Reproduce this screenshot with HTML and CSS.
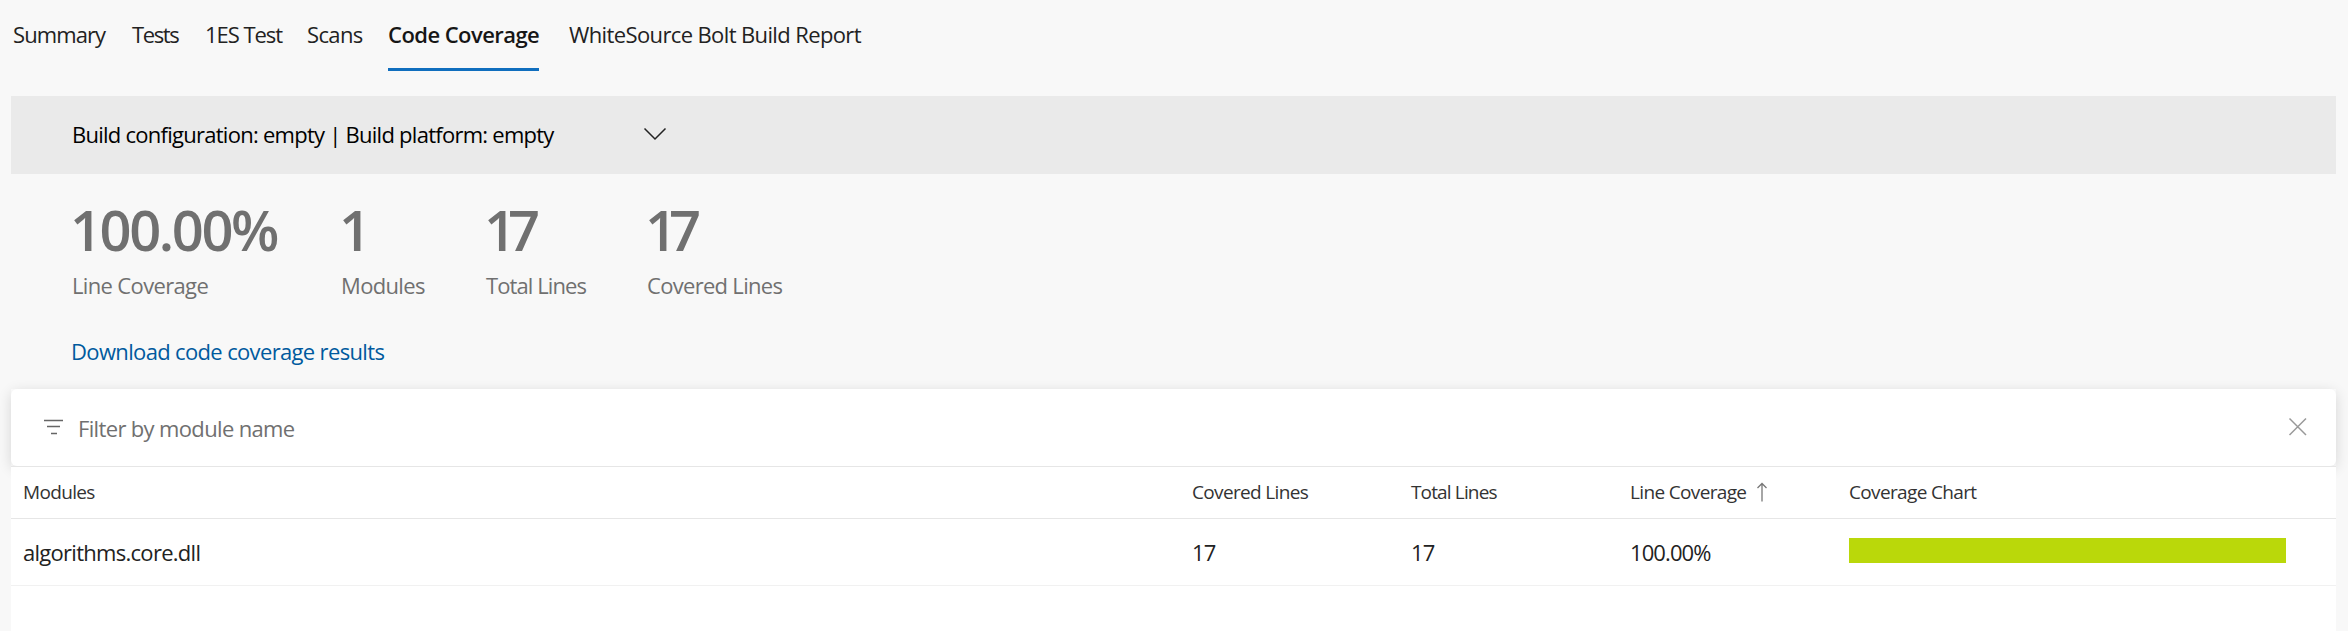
FILE: index.html
```html
<!DOCTYPE html>
<html lang="en">
<head>
<meta charset="utf-8">
<title>Code Coverage</title>
<link rel="stylesheet" href="styles.css">
</head>
<body>
<nav class="tabs">
  <a class="tab summary"><span>Summary</span></a>
  <a class="tab tests"><span>Tests</span></a>
  <a class="tab es-test"><span>1ES Test</span></a>
  <a class="tab scans"><span>Scans</span></a>
  <a class="tab active"><span>Code Coverage</span></a>
  <a class="tab report"><span>WhiteSource Bolt Build Report</span></a>
</nav>
<main class="content">
  <div class="config">
    <span class="config-text">Build configuration: empty | Build platform: empty</span>
    <svg class="chevron" width="24" height="14" viewBox="0 0 24 14"><path d="M1.500 1.500 12 12 22.500 1.500"/></svg>
  </div>
  <section class="stats">
    <div class="stat coverage"><strong>100.00%</strong><span>Line Coverage</span></div>
    <div class="stat modules"><strong>1</strong><span>Modules</span></div>
    <div class="stat total"><strong>17</strong><span>Total Lines</span></div>
    <div class="stat covered"><strong>17</strong><span>Covered Lines</span></div>
  </section>
  <a class="download"><span>Download code coverage results</span></a>
  <section class="table">
    <div class="filter">
      <svg class="funnel" width="20" height="16" viewBox="0 0 20 16"><path d="M1 1.500h19M4 7.500h13M8 14.500h6"/></svg>
      <span class="placeholder">Filter by module name</span>
      <svg class="close" width="20" height="20" viewBox="0 0 20 20"><path d="M1.500 1.500 18 18M18 1.500 1.500 18"/></svg>
    </div>
    <div class="row head">
      <span>Modules</span><span>Covered Lines</span><span class="total-lines">Total Lines</span>
      <span class="sorted"><span>Line Coverage</span><svg width="12" height="20" viewBox="0 0 12 20"><path d="M6 19.500V1.500M1.500 6 6 1.500 10.500 6"/></svg></span>
      <span>Coverage Chart</span>
    </div>
    <div class="row data">
      <span>algorithms.core.dll</span><span>17</span><span>17</span><span class="percent">100.00%</span><div class="bar"></div>
    </div>
  </section>
</main>
</body>
</html>
```
FILE: styles.css
```css
* { box-sizing: border-box; }
body {
  margin: 0;
  height: 631px;
  overflow: hidden;
  background: #f8f8f8;
  color: #222;
  font: 22px/30px "Open Sans", "Noto Sans", sans-serif;
  letter-spacing: -0.65px;
  white-space: nowrap;
}
svg { display: block; fill: none; flex: none; }
.tabs { display: flex; height: 71px; padding-left: 13px; line-height: 69px; }
.tab { flex: none; }
.summary { width: 119px; letter-spacing: -0.9px; }
.tests { width: 73px; letter-spacing: -1.4px; }
.es-test { width: 102px; letter-spacing: -1.05px; }
.scans { width: 81px; }
.active { width: 151px; margin-right: 30px; border-bottom: 3px solid #106ebe; font-weight: 600; letter-spacing: -0.55px; color: #161616; }
.report { letter-spacing: -0.62px; }
.content { margin: 25px 12px 0 11px; }
.config { display: flex; align-items: center; height: 78px; padding-left: 61px; background: #eaeaea; color: #000; letter-spacing: -0.74px; }
.config-text { width: 571px; padding-bottom: 3px; }
.chevron { margin-bottom: 3px; stroke: #222; stroke-width: 1.5; }
.stats { display: flex; height: 154px; padding: 20px 0 0 61px; color: #707070; }
.stat strong { display: block; height: 71px; font-size: 56px; line-height: 71px; font-weight: 600; letter-spacing: -8px; text-indent: -2px; }
.stat.coverage strong { letter-spacing: -2.4px; }
.stat span { line-height: 41px; }
.coverage { width: 269px; }
.modules { width: 145px; }
.total { width: 161px; letter-spacing: -0.9px; }
.covered { letter-spacing: -0.7px; }
.download { display: block; height: 61px; padding: 8px 0 0 60px; color: #005a9e; }
.table { height: 242px; background: #fff; }
.filter { display: flex; align-items: center; height: 77px; padding: 0 28px 0 32px; border-radius: 6px; background: #fff; box-shadow: 0 3px 14px rgba(0,0,0,.14); color: #707070; }
.funnel { margin-bottom: 1px; stroke: #666; stroke-width: 1.5; }
.placeholder { margin-left: 15px; letter-spacing: -0.65px; }
.close { margin: 0 0 1px auto; stroke: #999; stroke-width: 1.5; }
.row { position: relative; display: grid; grid-template-columns: 1169px 219px 219px 219px 437px; align-items: center; padding-left: 12px; background: #fff; }
.head { height: 53px; padding-bottom: 1px; border-top: 1px solid #e6e6e6; border-bottom: 1px solid #e6e6e6; font-size: 19px; color: #333; }
.total-lines { letter-spacing: -0.85px; }
.sorted { display: flex; align-items: center; gap: 10px; }
.sorted svg { stroke: #777; stroke-width: 1.3; }
.data { height: 67px; border-bottom: 1px solid #f1f1f1; letter-spacing: -0.72px; }
.percent { letter-spacing: -0.9px; }
.bar { width: 437px; height: 25px; margin-bottom: 3px; background: #bad80a; }
```
